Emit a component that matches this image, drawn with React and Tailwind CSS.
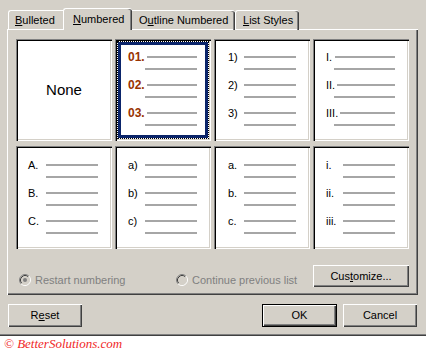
import React from "react";

const LINE = "h-[2px] bg-[#a6a6a6] shrink-0";
const SUNKEN =
  "shadow-[inset_1px_1px_0_#808080,inset_2px_2px_0_#000000,inset_-1px_-1px_0_#ffffff,inset_-2px_-2px_0_#d4d0c8]";
const RAISED =
  "shadow-[inset_1px_1px_0_#ffffff,inset_-1px_-1px_0_#404040,inset_-2px_-2px_0_#808080]";

function ListRows({ items, pad, numCls = "text-[11px] text-black" }) {
  return (
    <div className={"flex flex-col " + pad}>
      {items.map((it, i) => (
        <div key={i} className={i > 0 ? "mt-[9px]" : ""}>
          <div className="flex items-center h-[12px]">
            <span className={"shrink-0 leading-[12px] " + numCls + " " + it.nw}>{it.n}</span>
            <div className={LINE + " " + it.lw} />
          </div>
          <div className={LINE + " mt-[5px] " + it.sub} />
        </div>
      ))}
    </div>
  );
}

function Cell({ children, selected }) {
  return (
    <div className={"bg-white relative " + SUNKEN + (selected ? " p-[2px]" : "")}>
      {children}
    </div>
  );
}

function Radio({ checked }) {
  return (
    <svg width="12" height="12" viewBox="0 0 12 12" className="shrink-0">
      <circle cx="6" cy="6" r="5" fill="#d4d0c8" />
      <path d="M2.11 9.89 A5.5 5.5 0 0 1 9.89 2.11" fill="none" stroke="#808080" strokeWidth="1" />
      <path d="M9.89 2.11 A5.5 5.5 0 0 1 2.11 9.89" fill="none" stroke="#ffffff" strokeWidth="1" />
      <path d="M2.82 9.18 A4.5 4.5 0 0 1 9.18 2.82" fill="none" stroke="#404040" strokeWidth="1" />
      <path d="M9.18 2.82 A4.5 4.5 0 0 1 2.82 9.18" fill="none" stroke="#d4d0c8" strokeWidth="1" />
      {checked && <circle cx="6" cy="6" r="2" fill="#808080" />}
    </svg>
  );
}

function Button({ children, cls, isDefault }) {
  if (isDefault) {
    return (
      <div className={"border border-black " + cls}>
        <div className={"h-full flex items-center justify-center bg-[#d4d0c8] text-[11px] text-black " + RAISED}>
          {children}
        </div>
      </div>
    );
  }
  return (
    <div className={"flex items-center justify-center bg-[#d4d0c8] text-[11px] text-black " + RAISED + " " + cls}>
      {children}
    </div>
  );
}

export default function App() {
  const std = (n, l, s) => ({ n, nw: n === null ? "" : "", lw: "w-[52px]", sub: "w-[52px]" });
  void std;
  const mk = (labels, nw, sub) =>
    labels.map((n) => ({ n, nw, lw: "w-[52px]", sub: sub + " w-[52px]" }));

  return (
    <div className="w-[426px] h-[351px] bg-white overflow-hidden font-['Liberation_Sans',Arial,sans-serif] text-[11px] text-black">
      <div className="h-[336px] bg-[#d4d0c8] px-[7px] pt-[8px] shadow-[inset_0_-1px_0_#404040,inset_0_-2px_0_#808080]">
        {/* tabs */}
        <div className="flex items-end h-[22px]">
          <div className="w-[55px] ml-[1px] h-[20px] border-t border-l border-white rounded-tl-[3px] pl-[6px] pt-[2px] leading-[14px]">
            <span className="underline underline-offset-[1px]">B</span>ulleted
          </div>
          <div className="relative z-10 w-[69px] h-[22px] bg-[#d4d0c8] border-t border-l border-white rounded-tl-[3px] rounded-tr-[3px] pl-[9px] pt-[3px] leading-[14px] shadow-[inset_-1px_0_0_#404040,inset_-2px_0_0_#808080]">
            <span className="underline underline-offset-[1px]">N</span>umbered
          </div>
          <div className="w-[103px] h-[20px] border-t border-white rounded-tr-[3px] pl-[7px] pt-[2px] leading-[14px] shadow-[inset_-1px_0_0_#404040,inset_-2px_0_0_#808080]">
            O<span className="underline underline-offset-[1px]">u</span>tline Numbered
          </div>
          <div className="w-[64px] h-[20px] border-t border-l border-white rounded-tl-[3px] rounded-tr-[3px] pl-[7px] pt-[2px] leading-[14px] shadow-[inset_-1px_0_0_#404040,inset_-2px_0_0_#808080]">
            <span className="underline underline-offset-[1px]">L</span>ist Styles
          </div>
        </div>

        {/* panel */}
        <div className="-mt-px w-[411px] h-[266px] pl-[9px] pr-[9px] pt-[10px] shadow-[inset_1px_1px_0_#ffffff,inset_-1px_-1px_0_#404040,inset_-2px_-2px_0_#808080]">
          <div className="grid grid-cols-[repeat(4,96px)] grid-rows-[102px_103px] gap-x-[3px] gap-y-[5px]">
            {/* row 1 */}
            <Cell>
              <div className="h-full flex items-center justify-center text-[15px]">None</div>
            </Cell>
            <Cell selected>
              <div className="h-full border border-dotted border-black">
                <div className="h-full border-[3px] border-[#0a246a]">
                  <ListRows
                    pad="pl-[7px] pt-[6px]"
                    numCls="text-[12px] font-bold text-[#993300]"
                    items={["01.", "02.", "03."].map((n) => ({
                      n,
                      nw: "w-[19px]",
                      lw: "w-[50px]",
                      sub: "ml-[17px] w-[52px]",
                    }))}
                  />
                </div>
              </div>
            </Cell>
            <Cell>
              <ListRows pad="pl-[14px] pt-[12px]" items={mk(["1)", "2)", "3)"], "w-[16px]", "ml-[16px]")} />
            </Cell>
            <Cell>
              <ListRows
                pad="pl-[13px] pt-[12px]"
                items={[
                  { n: "I.", nw: "w-[9px]", lw: "w-[60px]", sub: "ml-[8px] w-[61px]" },
                  { n: "II.", nw: "w-[11px]", lw: "w-[58px]", sub: "ml-[8px] w-[61px]" },
                  { n: "III.", nw: "w-[14px]", lw: "w-[55px]", sub: "ml-[8px] w-[61px]" },
                ]}
              />
            </Cell>

            {/* row 2 */}
            <Cell>
              <ListRows pad="pl-[12px] pt-[13px]" items={mk(["A.", "B.", "C."], "w-[18px]", "ml-[18px]")} />
            </Cell>
            <Cell>
              <ListRows pad="pl-[13px] pt-[13px]" items={mk(["a)", "b)", "c)"], "w-[17px]", "ml-[17px]")} />
            </Cell>
            <Cell>
              <ListRows pad="pl-[14px] pt-[13px]" items={mk(["a.", "b.", "c."], "w-[16px]", "ml-[16px]")} />
            </Cell>
            <Cell>
              <ListRows pad="pl-[13px] pt-[13px]" items={mk(["i.", "ii.", "iii."], "w-[17px]", "ml-[17px]")} />
            </Cell>
          </div>

          {/* options row */}
          <div className="mt-[16px] h-[22px] flex items-start">
            <div className="ml-[3px] w-[157px] pt-[9px] flex items-center gap-[4px] text-[#808080]">
              <Radio checked />
              <span className="leading-[12px]">Restart numbering</span>
            </div>
            <div className="pt-[9px] flex items-center gap-[4px] text-[#808080]">
              <Radio />
              <span className="leading-[12px]">Continue previous list</span>
            </div>
            <Button cls="ml-auto w-[96px] h-[22px]">
              Cus<span className="underline underline-offset-[1px]">t</span>omize...
            </Button>
          </div>
        </div>

        {/* bottom buttons */}
        <div className="mt-[9px] flex items-start">
          <Button cls="ml-[1px] w-[74px] h-[23px]">
            R<span className="underline underline-offset-[1px]">e</span>set
          </Button>
          <Button isDefault cls="ml-auto w-[75px] h-[23px]">OK</Button>
          <Button cls="ml-[6px] mr-[2px] w-[74px] h-[23px]">Cancel</Button>
        </div>
      </div>
      <div className="h-[15px] pl-[4px] flex items-center">
        <span className="font-['Liberation_Serif',serif] italic text-[13px] leading-[15px] text-[#f02828]">
          © BetterSolutions.com
        </span>
      </div>
    </div>
  );
}
